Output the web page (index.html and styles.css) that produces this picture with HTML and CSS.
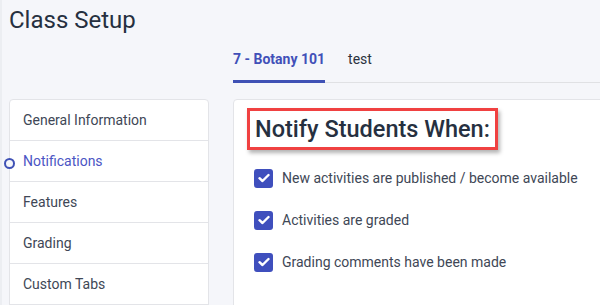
FILE: index.html
```html
<!DOCTYPE html>
<html lang="en">

<head>
    <meta charset="UTF-8">
    <meta name="viewport" content="width=device-width, initial-scale=1.0">
    <title>Class Setup</title>
    <link rel="stylesheet" href="styles.css">
</head>

<body>
    <div class="page">
        <h1 class="title">Class Setup</h1>
        <div class="layout">
            <div></div>
            <div class="tabs">
                <div class="tab active">7 - Botany 101</div>
                <div class="tab">test</div>
            </div>

            <ul class="side">
                <li>General Information</li>
                <li class="current">Notifications</li>
                <li>Features</li>
                <li>Grading</li>
                <li>Custom Tabs</li>
            </ul>

            <div class="card">
                <h2 class="notify">Notify Students When:</h2>
                <label class="check">
                    <span class="box"><svg width="12" height="10" viewBox="0 0 12 10"><path d="M1.5 5.2 4.5 8 10.5 2" fill="none" stroke="#fff" stroke-width="2.4" stroke-linecap="round" stroke-linejoin="round"/></svg></span>
                    New activities are published / become available
                </label>
                <label class="check">
                    <span class="box"><svg width="12" height="10" viewBox="0 0 12 10"><path d="M1.5 5.2 4.5 8 10.5 2" fill="none" stroke="#fff" stroke-width="2.4" stroke-linecap="round" stroke-linejoin="round"/></svg></span>
                    Activities are graded
                </label>
                <label class="check">
                    <span class="box"><svg width="12" height="10" viewBox="0 0 12 10"><path d="M1.5 5.2 4.5 8 10.5 2" fill="none" stroke="#fff" stroke-width="2.4" stroke-linecap="round" stroke-linejoin="round"/></svg></span>
                    Grading comments have been made
                </label>
            </div>
        </div>
    </div>
</body>

</html>
```

FILE: styles.css
```css
* {
    box-sizing: border-box;
    margin: 0;
    padding: 0;
}

body {
    background-color: #f5f6fa;
    font-family: Roboto, 'Liberation Sans', sans-serif;
    color: #2b3240;
    overflow: hidden;
    border-left: 2px solid #eceef2;
}

.page {
    padding-left: 7px;
}

.title {
    font-size: 24px;
    font-weight: 400;
    line-height: 28px;
    padding-top: 6px;
    color: #263040;
}

.layout {
    display: grid;
    grid-template-columns: 200px 640px;
    column-gap: 24px;
}

.tabs {
    display: flex;
    border-bottom: 1px solid #e0e1e4;
    height: 49px;
    padding-top: 15px;
    margin-bottom: 16px;
}

.tab {
    font-size: 14px;
    line-height: 20px;
    margin-right: 23px;
    color: #2b3240;
}

.tab.active {
    font-weight: 700;
    color: #4150b8;
    border-bottom: 3px solid #3f51b5;
    height: 34px;
    margin-bottom: -2px;
}

.side {
    list-style: none;
    background-color: white;
    border: 1px solid #e3e4e8;
    border-radius: 4px;
    height: 220px;
}

.side li {
    position: relative;
    height: 41px;
    line-height: 40px;
    padding-left: 13px;
    font-size: 14px;
    color: #404756;
    border-bottom: 1px solid #e3e4e8;
}

.side li.current {
    color: #4b55c4;
}

.side li.current::before {
    content: "";
    position: absolute;
    left: -6px;
    top: 17px;
    width: 7px;
    height: 7px;
    border: 2px solid #3f51b5;
    border-radius: 50%;
    background-color: #f5f6fa;
}

.card {
    background-color: white;
    border: 1px solid #e3e4e8;
    border-radius: 4px;
    padding: 8px 0 0 13px;
    height: 230px;
}

.notify {
    display: inline-block;
    font-size: 23.5px;
    font-weight: 500;
    line-height: 30px;
    color: #263040;
    border: 3px solid #f04141;
    padding: 3px 5px 3px 5px;
    height: 42px;
    box-shadow: 2px 3px 4px rgba(0, 0, 0, 0.3);
    margin-bottom: 18px;
}

.check {
    display: flex;
    align-items: center;
    gap: 9px;
    padding-left: 7px;
    font-size: 14px;
    color: #404756;
    height: 20px;
    margin-bottom: 22px;
}

.box {
    width: 19px;
    height: 19px;
    border-radius: 3px;
    background-color: #3f4fbd;
    display: flex;
    align-items: center;
    justify-content: center;
}
```
